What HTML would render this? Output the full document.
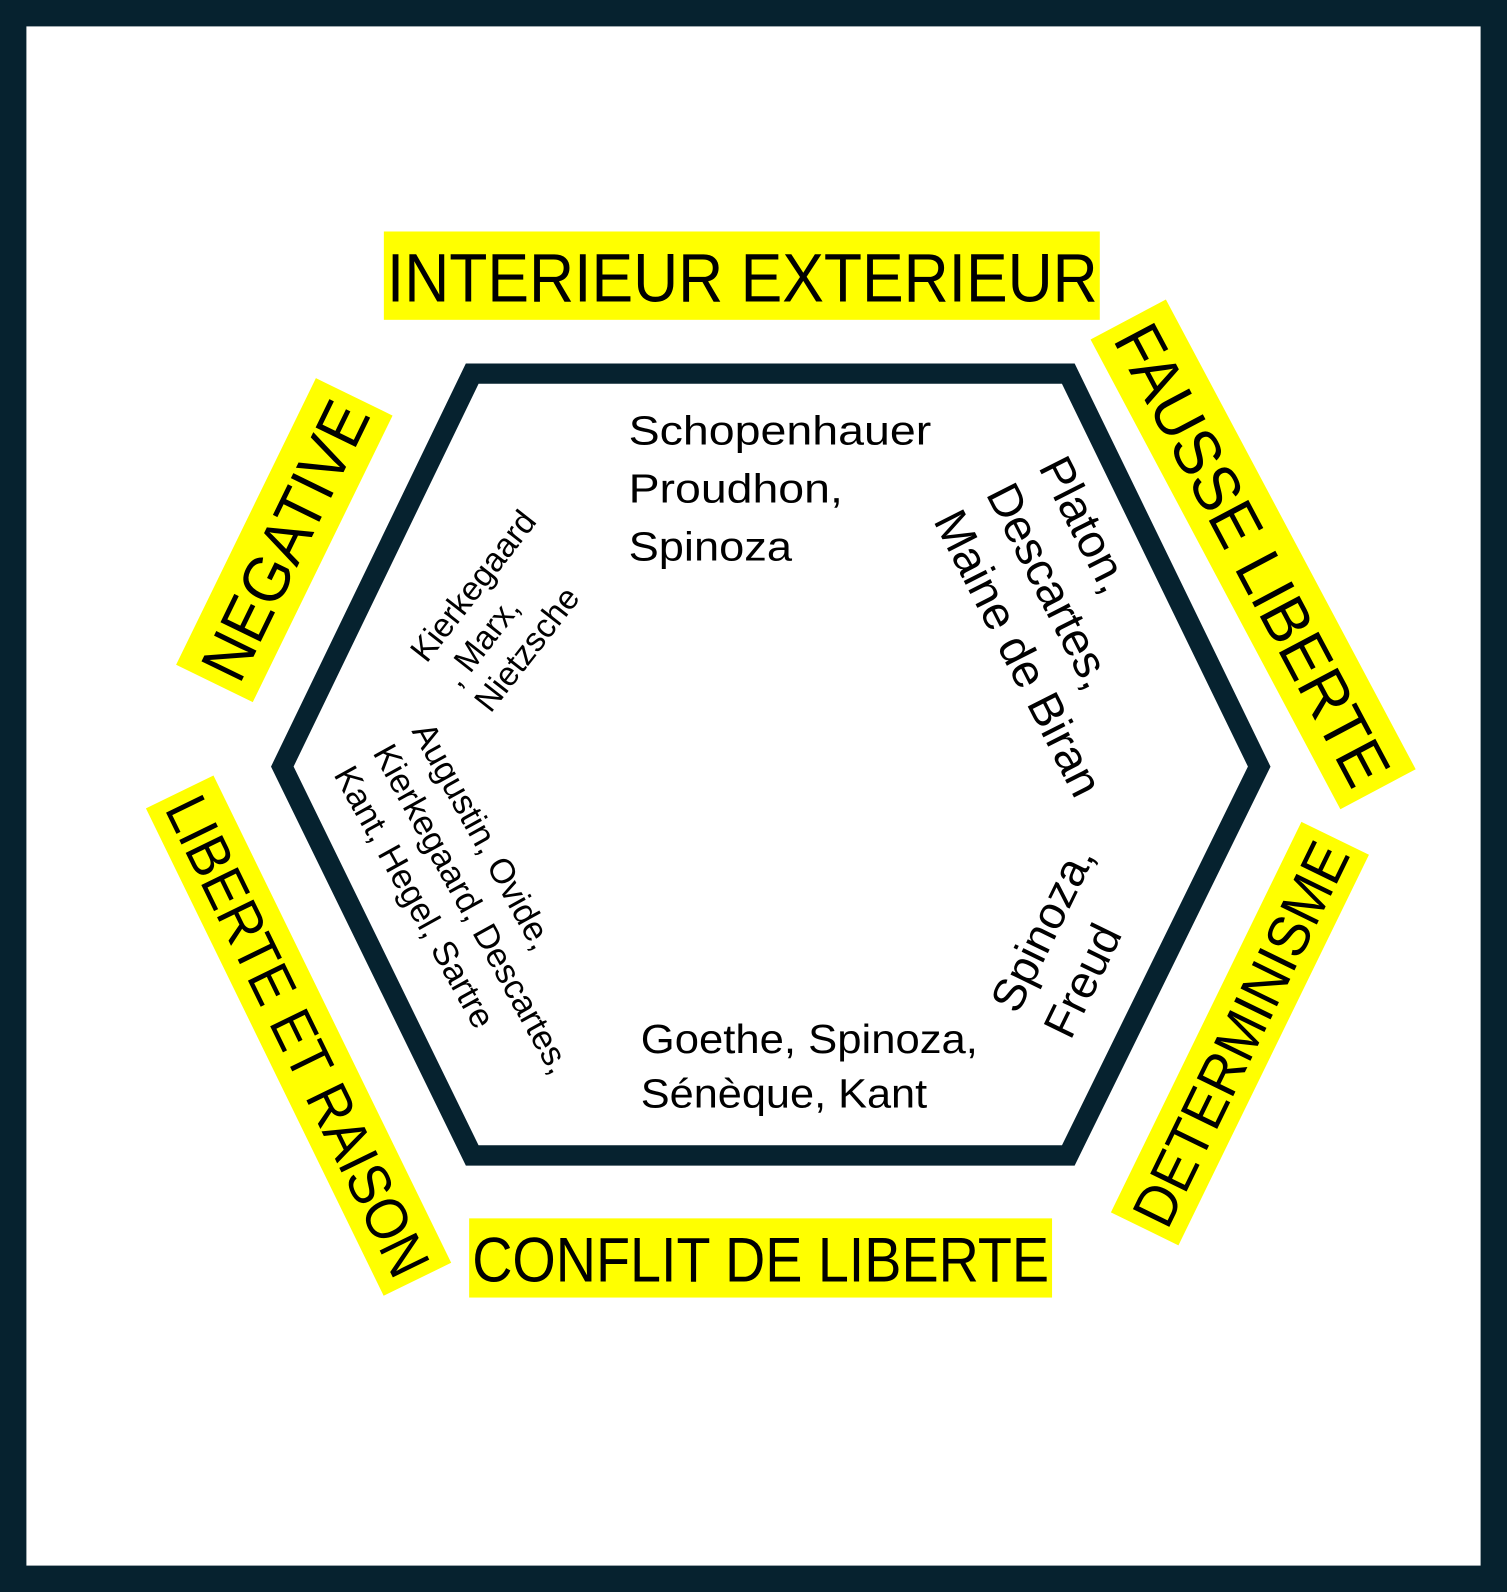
<!DOCTYPE html>
<html><head><meta charset="utf-8"><style>
html,body{margin:0;padding:0;background:#06222f}
svg{display:block}
text{font-family:"Liberation Sans",Arial,sans-serif;fill:#000}
</style></head><body>
<svg width="1507" height="1592" viewBox="0 0 1484 1568" preserveAspectRatio="none" xmlns="http://www.w3.org/2000/svg">
<rect x="0" y="0" width="1484" height="1568" fill="#06222f"/>
<rect x="26" y="26" width="1432" height="1516" fill="#fff"/>
<polygon points="465,368 1052,368 1240,755 1052,1138 465,1138 278,755" fill="none" stroke="#06222f" stroke-width="20"/>

<rect x="378" y="228" width="705" height="87" fill="#ffff00"/>
<text x="381" y="297" font-size="68" textLength="700" lengthAdjust="spacingAndGlyphs">INTERIEUR EXTERIEUR</text>

<rect x="462" y="1200" width="574" height="78" fill="#ffff00"/>
<text x="465" y="1262" font-size="62" textLength="568" lengthAdjust="spacingAndGlyphs">CONFLIT DE LIBERTE</text>

<g transform="translate(280,532) rotate(-64)">
<rect x="-157" y="-42" width="314" height="84" fill="#ffff00"/>
<text x="0" y="23" font-size="64" text-anchor="middle" textLength="296" lengthAdjust="spacingAndGlyphs">NEGATIVE</text>
</g>
<g transform="translate(1234,546) rotate(62)">
<rect x="-262" y="-42" width="524" height="84" fill="#ffff00"/>
<text x="0" y="23" font-size="64" text-anchor="middle" textLength="504" lengthAdjust="spacingAndGlyphs">FAUSSE LIBERTE</text>
</g>
<g transform="translate(1221,1018) rotate(-64)">
<rect x="-214" y="-37" width="428" height="74" fill="#ffff00"/>
<text x="0" y="21" font-size="58" text-anchor="middle" textLength="412" lengthAdjust="spacingAndGlyphs">DETERMINISME</text>
</g>
<g transform="translate(294,1020) rotate(64)">
<rect x="-267" y="-37" width="534" height="74" fill="#ffff00"/>
<text x="0" y="21" font-size="58" text-anchor="middle" textLength="518" lengthAdjust="spacingAndGlyphs">LIBERTE ET RAISON</text>
</g>

<g font-size="40">
<text x="619" y="438" textLength="298" lengthAdjust="spacingAndGlyphs">Schopenhauer</text>
<text x="619" y="495" textLength="211" lengthAdjust="spacingAndGlyphs">Proudhon,</text>
<text x="619" y="552" textLength="161" lengthAdjust="spacingAndGlyphs">Spinoza</text>
<text x="631" y="1037" textLength="332" lengthAdjust="spacingAndGlyphs">Goethe, Spinoza,</text>
<text x="631" y="1091" textLength="282" lengthAdjust="spacingAndGlyphs">Sénèque, Kant</text>
</g>

<g transform="translate(1022,460) rotate(63)" font-size="46">
<text x="0" y="0">Platon,</text>
<text x="0" y="58">Descartes,</text>
<text x="0" y="116">Maine de Biran</text>
</g>

<g transform="translate(1002,1000) rotate(-64)" font-size="45">
<text x="0" y="0">Spinoza,</text>
<text x="0" y="58">Freud</text>
</g>

<g transform="translate(420,654) rotate(-52)" font-size="33">
<text x="0" y="0">Kierkegaard</text>
<text x="0" y="40">, Marx,</text>
<text x="0" y="80">Nietzsche</text>
</g>

<g transform="translate(405,720) rotate(61)" font-size="34">
<text x="0" y="0">Augustin, Ovide,</text>
<text x="0" y="44">Kierkegaard, Descartes,</text>
<text x="0" y="88">Kant, Hegel, Sartre</text>
</g>
</svg>
</body></html>
